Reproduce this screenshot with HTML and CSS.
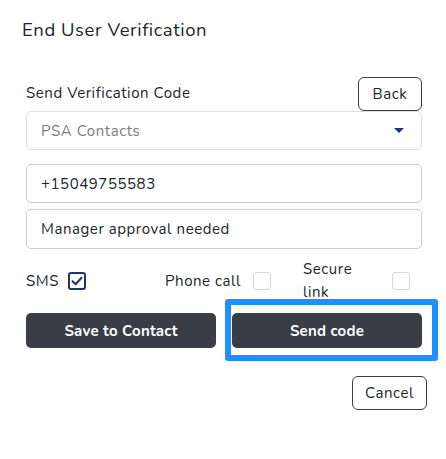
FILE: index.html
```html
<!DOCTYPE html>
<html>
<head>
<meta charset="utf-8">
<link rel="stylesheet" href="styles.css">
</head>
<body>
<div class="modal">
  <h1 class="title">End User Verification</h1>
  <div class="body">
    <div class="label-row">
      <span class="label">Send Verification Code</span>
      <button class="btn-outline back">Back</button>
    </div>
    <div class="select">
      <span class="placeholder">PSA Contacts</span>
      <svg class="caret" width="10" height="5" viewBox="0 0 10 5"><path d="M0 0H10L5 5Z" fill="#1f3566"/></svg>
    </div>
    <div class="input input-phone">+15049755583</div>
    <div class="input">Manager approval needed</div>
    <div class="checks">
      <div class="check">
        <span class="check-label">SMS</span>
        <span class="box checked">
          <svg width="14" height="14" viewBox="0 0 14 14"><path d="M2.5 7.2L5.6 10.2L11.5 3.8" fill="none" stroke="#1f3566" stroke-width="2" stroke-linecap="round" stroke-linejoin="round"/></svg>
        </span>
      </div>
      <div class="check">
        <span class="check-label">Phone call</span>
        <span class="box"></span>
      </div>
      <div class="check">
        <span class="check-label wrap">Secure link</span>
        <span class="box"></span>
      </div>
    </div>
    <div class="actions">
      <button class="btn-dark">Save to Contact</button>
      <div class="focus-wrap">
        <button class="btn-dark">Send code</button>
        <span class="highlight"></span>
      </div>
    </div>
    <div class="footer">
      <button class="btn-outline cancel">Cancel</button>
    </div>
  </div>
</div>
</body>
</html>
```

FILE: styles.css
```css
* { box-sizing: border-box; }
html, body { margin: 0; padding: 0; background: #fff; }
body {
  font-family: "Nunito", "Lato", "Open Sans", sans-serif;
  color: #212529;
  width: 446px;
  height: 459px;
  overflow: hidden;
  letter-spacing: 0.035em;
}
.modal { padding: 17px 0 0 0; }
.title {
  margin: 0 0 0 22px;
  font-size: 18.5px;
  font-weight: 400;
  line-height: 26px;
}
.body { padding: 34px 24px 0 26px; }
.label-row {
  display: flex;
  justify-content: space-between;
  align-items: flex-end;
  height: 34px;
}
.label { font-size: 15px; line-height: 20px; margin-bottom: 8px; }
.btn-outline {
  font-family: inherit;
  letter-spacing: inherit;
  font-size: 15px;
  color: #212529;
  background: #fff;
  border: 1px solid #3a3d45;
  border-radius: 6px;
  height: 34px;
  padding: 0;
  cursor: pointer;
}
.back { width: 64px; }
.select {
  height: 39px;
  border: 1px solid #dcdfe3;
  border-radius: 5px;
  display: flex;
  align-items: center;
  justify-content: space-between;
  padding: 0 17px 0 14px;
}
.placeholder { color: #7a7d82; font-size: 15px; }
.caret { display: block; }
.input {
  height: 40px;
  border: 1px solid #c9ccd1;
  border-radius: 5px;
  display: flex;
  align-items: center;
  padding: 0 14px;
  font-size: 15px;
  margin-top: 6px;
}
.input-phone { margin-top: 14px; height: 39px; }
.checks {
  display: grid;
  grid-template-columns: 139px 138px 1fr;
  align-items: center;
  margin-top: 9px;
  height: 46px;
}
.check { display: flex; align-items: center; }
.check-label { font-size: 15px; line-height: 23px; }
.box {
  width: 18px;
  height: 18px;
  border: 1px solid #d4d7db;
  border-radius: 3px;
  display: flex;
  align-items: center;
  justify-content: center;
  flex: none;
}
.check:nth-child(1) .box { margin-left: 9px; }
.check:nth-child(2) .box { margin-left: 12px; }
.wrap { width: 60px; flex: none; }
.check:nth-child(3) .box { margin-left: 29px; }
.box.checked { border: 2px solid #1f3566; }
.actions {
  display: grid;
  grid-template-columns: 1fr 1fr;
  gap: 16px;
  margin-top: 9px;
}
.btn-dark {
  font-family: inherit;
  letter-spacing: 0.015em;
  width: 100%;
  height: 35px;
  border: none;
  border-radius: 5px;
  background: #3a3d45;
  color: #fff;
  font-size: 15px;
  font-weight: 700;
}
.focus-wrap { position: relative; }
.highlight {
  position: absolute;
  left: -7px;
  top: -14px;
  right: -16px;
  bottom: -13px;
  border: 6px solid #1e90ff;
  border-radius: 3px;
  pointer-events: none;
}
.footer {
  display: flex;
  justify-content: flex-end;
  margin-top: 28px;
  margin-right: -5px;
}
.cancel { width: 75px; }
```
